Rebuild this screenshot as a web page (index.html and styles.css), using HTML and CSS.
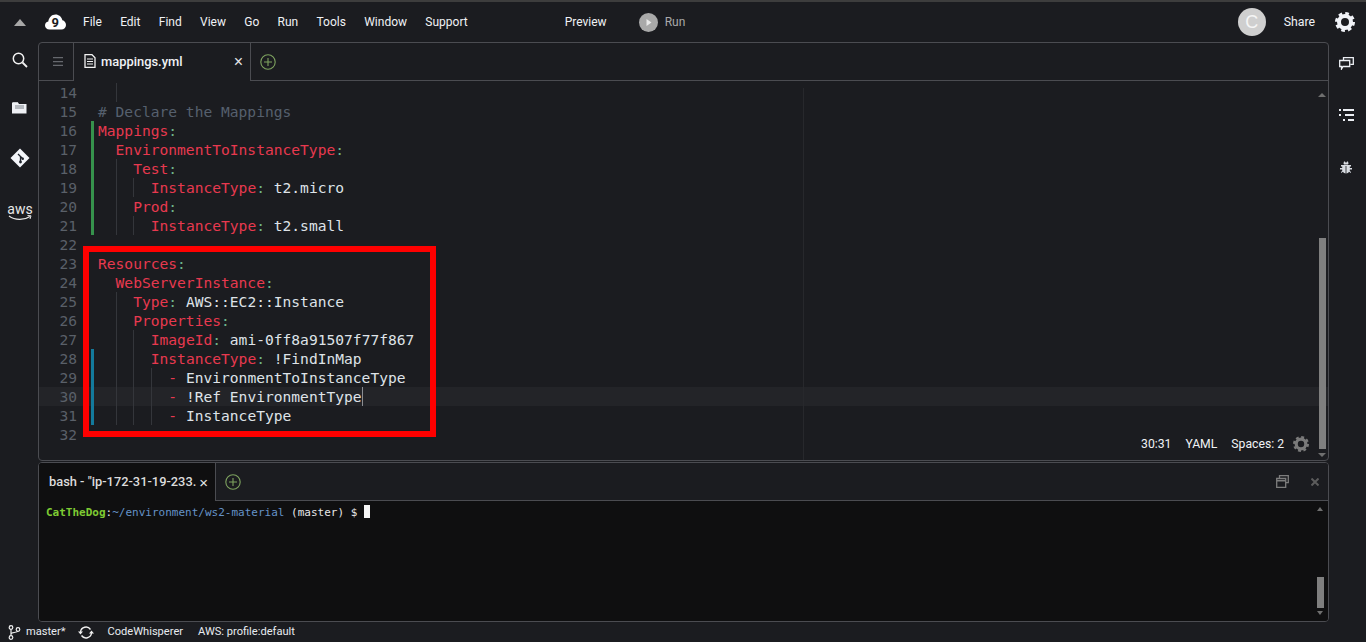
FILE: index.html
```html
<!DOCTYPE html>
<html lang="en">
<head>
<meta charset="utf-8">
<title>mappings.yml</title>
<link rel="stylesheet" href="styles.css">
</head>
<body>
<div class="app">
  <header class="topbar">
    <svg class="caret" width="12" height="7" viewBox="0 0 12 7"><path d="M6 0l6 7H0z" fill="#a8a8a8"/></svg>
    <svg class="logo" width="21" height="16" viewBox="0 0 21 16"><path d="M4.500 15.500C1.800 15.500 0 13.800 0 11.500c0-2 1.300-3.500 3.300-3.900C3.900 3.300 6.900 0.500 10.500 0.500c3.400 0 6.200 2.400 6.900 5.700 2.100 0.500 3.600 2.400 3.600 4.700 0 2.600-2 4.600-4.600 4.600z" fill="#fff"/><text x="10.300" y="12.500" class="logo-nine">9</text></svg>
    <nav class="menu">
      <span>File</span><span>Edit</span><span>Find</span><span>View</span><span>Go</span><span>Run</span><span>Tools</span><span>Window</span><span>Support</span>
    </nav>
    <span class="preview">Preview</span>
    <span class="run"><svg width="19" height="19" viewBox="0 0 19 19"><circle cx="9.500" cy="9.500" r="9.500" fill="#a9a9a9"/><path d="M7.500 6l5 3.500-5 3.500z" fill="#e8e8e8"/></svg>Run</span>
    <span class="spacer"></span>
    <span class="avatar">C</span>
    <span class="share">Share</span>
    <svg class="gear-top" width="20" height="20" viewBox="0 0 20 20"><circle cx="10" cy="10" r="6" fill="none" stroke="#f1f3f8" stroke-width="4"/><circle cx="10" cy="10" r="8.500" fill="none" stroke="#f1f3f8" stroke-width="3" stroke-dasharray="3.600 3.075"/></svg>
  </header>

  <div class="middle">
    <aside class="side-left">
      <svg class="s-search" width="16" height="16" viewBox="0 0 16 16"><circle cx="6.500" cy="6.500" r="5.200" fill="none" stroke="#f2f2f2" stroke-width="1.500"/><path d="M10.500 10.500l4.500 4.500" stroke="#f2f2f2" stroke-width="1.800"/></svg>
      <svg class="s-folder" width="15" height="13" viewBox="0 0 15 13"><path d="M0 1.500h6l1 1.500h7.500v9.500H0z" fill="#eef0f4"/><path d="M3 4.500h9v1H3zM3 6.500h9v1H3z" fill="#7b8088"/><path d="M1 1h5v1H1z" fill="#c5c8cc"/></svg>
      <svg class="s-git" width="20" height="20" viewBox="0 0 20 20"><path d="M10 0.500L19.500 10 10 19.500 0.500 10z" fill="#f4f6fa"/><path d="M8 6l2.500 2.500M10.500 8.500v5M10.500 8.500l2 2" stroke="#20242c" stroke-width="1.300" fill="none"/><circle cx="10.500" cy="14" r="1.400" fill="#20242c"/><circle cx="12.700" cy="10.700" r="1.300" fill="#20242c"/></svg>
      <div class="s-aws"><span>aws</span><svg width="24" height="6" viewBox="0 0 24 6"><path d="M1 1c6 4.500 15 4.500 21 0.500" fill="none" stroke="#e8e8e8" stroke-width="1.200"/><path d="M19.500 0.500L23 0.800 22 4" fill="none" stroke="#e8e8e8" stroke-width="1"/></svg></div>
    </aside>

    <main class="work">
      <section class="panel editor">
        <div class="tabs">
          <div class="hamb"><svg width="10" height="9" viewBox="0 0 10 9"><path d="M0 0h10v1.300H0zM0 3.900h10v1.300H0zM0 7.700h10V9H0z" fill="#66686e"/></svg></div>
          <div class="tab ed-tab">
            <svg width="12" height="14" viewBox="0 0 12 14"><path d="M1 .7h7l3 3v9.600H1z" fill="#1b1c20" stroke="#f2f2f2" stroke-width="1.300"/><path d="M3 5h6M3 7.500h6M3 10h6" stroke="#f2f2f2"/></svg>
            <span class="tab-name">mappings.yml</span>
            <span class="tab-x">×</span>
          </div>
          <div class="add-cell"><svg width="16" height="16" viewBox="0 0 16 16"><circle cx="8" cy="8" r="7.200" fill="none" stroke="#7ea35f" stroke-width="1.100"/><path d="M8 4v8M4 8h8" stroke="#7ea35f" stroke-width="1.100"/></svg></div>
        </div>
        <div class="code">
          <div class="row"><span class="num">14</span><span class="mark"></span><span class="src">  <i class="g">  </i></span></div>
          <div class="row"><span class="num">15</span><span class="mark"></span><span class="src cm"># Declare the Mappings</span></div>
          <div class="row"><span class="num">16</span><span class="mark add"></span><span class="src"><b>Mappings</b><u>:</u></span></div>
          <div class="row"><span class="num">17</span><span class="mark add"></span><span class="src">  <b>EnvironmentToInstanceType</b><u>:</u></span></div>
          <div class="row"><span class="num">18</span><span class="mark add"></span><span class="src">  <i class="g">  </i><b>Test</b><u>:</u></span></div>
          <div class="row"><span class="num">19</span><span class="mark add"></span><span class="src">  <i class="g">  </i><i class="g">  </i><b>InstanceType</b><u>:</u> t2.micro</span></div>
          <div class="row"><span class="num">20</span><span class="mark add"></span><span class="src">  <i class="g">  </i><b>Prod</b><u>:</u></span></div>
          <div class="row"><span class="num">21</span><span class="mark add"></span><span class="src">  <i class="g">  </i><i class="g">  </i><b>InstanceType</b><u>:</u> t2.small</span></div>
          <div class="row"><span class="num">22</span><span class="mark"></span><span class="src"></span></div>
          <div class="row"><span class="num">23</span><span class="mark"></span><span class="src"><b>Resources</b><u>:</u></span></div>
          <div class="row"><span class="num">24</span><span class="mark"></span><span class="src">  <b>WebServerInstance</b><u>:</u></span></div>
          <div class="row"><span class="num">25</span><span class="mark"></span><span class="src">  <i class="g">  </i><b>Type</b><u>:</u> AWS::EC2::Instance</span></div>
          <div class="row"><span class="num">26</span><span class="mark"></span><span class="src">  <i class="g">  </i><b>Properties</b><u>:</u></span></div>
          <div class="row"><span class="num">27</span><span class="mark"></span><span class="src">  <i class="g">  </i><i class="g">  </i><b>ImageId</b><u>:</u> ami-0ff8a91507f77f867</span></div>
          <div class="row"><span class="num">28</span><span class="mark mod"></span><span class="src">  <i class="g">  </i><i class="g">  </i><b>InstanceType</b><u>:</u> !FindInMap</span></div>
          <div class="row"><span class="num">29</span><span class="mark mod"></span><span class="src">  <i class="g">  </i><i class="g">  </i><i class="g">  </i><b>-</b> EnvironmentToInstanceType</span></div>
          <div class="row active"><span class="num">30</span><span class="mark mod"></span><span class="src">  <i class="g">  </i><i class="g">  </i><i class="g">  </i><b>-</b> !Ref EnvironmentType<span class="caret-bar"></span></span></div>
          <div class="row"><span class="num">31</span><span class="mark mod"></span><span class="src">  <i class="g">  </i><i class="g">  </i><i class="g">  </i><b>-</b> InstanceType</span></div>
          <div class="row"><span class="num">32</span><span class="mark"></span><span class="src"></span></div>
        </div>
        <div class="margin-line"></div>
        <div class="ed-scroll"><span class="arrow up"></span><span class="thumb"></span><span class="arrow down"></span></div>
        <div class="ed-status">
          <span>30:31</span><span>YAML</span><span>Spaces: 2</span>
          <svg width="16" height="16" viewBox="0 0 20 20"><circle cx="10" cy="10" r="6" fill="none" stroke="#7a7a7a" stroke-width="4"/><circle cx="10" cy="10" r="8.500" fill="none" stroke="#7a7a7a" stroke-width="3" stroke-dasharray="3.600 3.075"/></svg>
        </div>
        <div class="highlight"></div>
      </section>

      <section class="panel terminal">
        <div class="tabs term-tabs">
          <div class="tab term-tab"><span class="term-name">bash - "ip-172-31-19-233.</span><span class="tab-x">×</span></div>
          <div class="add-cell"><svg width="16" height="16" viewBox="0 0 16 16"><circle cx="8" cy="8" r="7.200" fill="none" stroke="#7ea35f" stroke-width="1.100"/><path d="M8 4v8M4 8h8" stroke="#7ea35f" stroke-width="1.100"/></svg></div>
          <span class="spacer"></span>
          <svg class="restore" width="13" height="13" viewBox="0 0 13 13"><path d="M3.500 3V.7h8.800v7H10" fill="none" stroke="#7d7d7d" stroke-width="1.300"/><path d="M.7 3.500h9v8.800h-9z" fill="none" stroke="#7d7d7d" stroke-width="1.300"/><path d="M1 5h8v1.500H1z" fill="#7d7d7d"/></svg>
          <svg class="term-close" width="8" height="8" viewBox="0 0 8 8"><path d="M.5.500l7 7M7.500.500l-7 7" stroke="#5c5c5c" stroke-width="2"/></svg>
        </div>
        <div class="term-body">
          <div class="prompt"><b>CatTheDog</b><em>:</em><u>~/environment/ws2-material</u> (master) $ <span class="cursor"></span></div>
          <div class="term-scroll"><span class="arrow up"></span><span class="thumb"></span><span class="arrow down"></span></div>
        </div>
      </section>
    </main>

    <aside class="side-right">
      <svg class="r-chat" width="15" height="13" viewBox="0 0 15 13"><path d="M4.500 3V.7h9.800v6.600h-3" fill="none" stroke="#eceff4" stroke-width="1.300"/><path d="M.7 3.500h10v6H4L2.500 12V9.500H.7z" fill="#1b1c20" stroke="#eceff4" stroke-width="1.300"/></svg>
      <svg class="r-list" width="15" height="13" viewBox="0 0 15 13"><path d="M0 1h2v2H0zM4 1h11v2H4zM0 6h2v2H0zM6 6h9v2H6zM4 11h2v2H4zM9 11h6v2H9z" fill="#eceff4"/></svg>
      <svg class="r-bug" width="12" height="13" viewBox="0 0 12 13"><path d="M3.500 2.500L4 0.500h1l.4 1h1.200l.4-1h1l.5 2-.5 1H4z" fill="#d9dce2"/><path d="M1 4h10v1.500H9.800V7H12v1.500H9.800V10l1.200 1v1l-2-1.200c-.6 1-1.500 1.500-3 1.500s-2.400-.5-3-1.500L1 12v-1l1.200-1V8.500H0V7h2.200V5.500H1z" fill="#d9dce2"/><path d="M5.600 5h.8v7h-.8z" fill="#1b1c20"/></svg>
    </aside>
  </div>

  <footer class="statusbar">
    <svg width="13" height="15" viewBox="0 0 13 15"><circle cx="3" cy="2.500" r="1.800" fill="none" stroke="#f0f0f0" stroke-width="1.200"/><circle cx="3" cy="12.500" r="1.800" fill="none" stroke="#f0f0f0" stroke-width="1.200"/><circle cx="10" cy="4.500" r="1.800" fill="none" stroke="#f0f0f0" stroke-width="1.200"/><path d="M3 4.500v6M3 9c0-2 6-1 7-3" fill="none" stroke="#f0f0f0" stroke-width="1.200"/></svg>
    <span class="branch">master*</span>
    <svg class="sync" width="16" height="13" viewBox="0 0 16 13"><path d="M2.500 6a5.500 5.500 0 0 1 10-2.500M13.500 7a5.500 5.500 0 0 1-10 2.500" fill="none" stroke="#f0f0f0" stroke-width="1.400"/><path d="M0 5.500h5L2.500 8.500zM16 7.500h-5l2.500-3z" fill="#f0f0f0"/></svg>
    <span class="cw">CodeWhisperer</span>
    <span class="profile">AWS: profile:default</span>
  </footer>
</div>
</body>
</html>
```

FILE: styles.css
```css
* { box-sizing: border-box; }
html, body { margin: 0; padding: 0; height: 100%; overflow: hidden; }
body {
  background: #1b1c20;
  color: #f0f2f5;
  font: 12px/1 Roboto, "Liberation Sans", sans-serif;
}
.app { width: 1366px; height: 642px; display: flex; flex-direction: column; }
.spacer { flex: 1; }

/* top bar */
.topbar {
  height: 42px;
  border-top: 2px solid #3d3d3d;
  display: flex;
  align-items: center;
  padding: 0 11px 0 14px;
  flex: none;
}
.caret { margin-right: 19px; }
.logo { margin-right: 17px; }
.logo-nine { font: 700 13px Roboto, sans-serif; fill: #1b1c20; text-anchor: middle; }
.menu { display: flex; gap: 18.300px; }
.menu span { font-size: 12px; }
.preview { margin-left: 97px; }
.run { margin-left: 32px; display: flex; align-items: center; gap: 7px; color: #a9a9a9; }
.avatar {
  width: 28px; height: 28px; border-radius: 50%;
  background: #cfcfcf; color: #f5f5f5;
  display: flex; align-items: center; justify-content: center;
  font: 18px "Liberation Sans", sans-serif;
}
.share { margin-left: 18px; font-size: 12.300px; }
.gear-top { margin-left: 20px; }

/* layout */
.middle { flex: 1; display: flex; min-height: 0; }
.side-left { width: 38px; flex: none; display: flex; flex-direction: column; align-items: center; position: relative; }
.s-search { margin: 10px 0 0 1px; }
.s-folder { margin: 33px 0 0 1px; }
.s-git { margin: 34px 0 0 1px; }
.s-aws { margin: 36px 0 0 2px; display: flex; flex-direction: column; align-items: center; color: #e8e8e8; font: 14px/11px Roboto, sans-serif; }
.side-right { width: 37px; flex: none; display: flex; flex-direction: column; align-items: center; padding-right: 3px; }
.r-chat { margin: 15px 0 0 0; }
.r-list { margin-top: 38px; }
.r-bug { margin-top: 40px; }
.work { width: 1291px; display: flex; flex-direction: column; gap: 1px; }
.panel { border: 1px solid #4b4c51; border-radius: 4px; position: relative; overflow: hidden; }
.editor { height: 419px; flex: none; }
.terminal { flex: 1; display: flex; flex-direction: column; }

/* tabs */
.tabs { height: 38px; display: flex; align-items: stretch; border-bottom: 1px solid #4b4c51; }
.hamb { width: 35px; border-right: 1px solid #4b4c51; display: flex; align-items: center; justify-content: center; padding-left: 3px; }
.tab {
  width: 177px; margin-bottom: -1px; background: #1b1c20;
  border-right: 1px solid #4b4c51;
  display: flex; align-items: center; padding: 0 7px 2px 10px;
}
.ed-tab .tab-x { position: relative; top: 1px; }
.tab-name { margin-left: 5px; flex: 1; font: 500 12.900px Roboto, sans-serif; }
.tab-x { font: 16px "Liberation Sans", sans-serif; color: #e8e8e8; }
.add-cell { display: flex; align-items: center; padding-left: 9px; }

/* code */
.code {
  height: 379px;
  padding-top: 2px;
  font: 14.600px/19px "DejaVu Sans Mono", monospace;
  overflow: hidden;
}
.row { display: flex; height: 19px; }
.row.active { background: #232428; }
.num { width: 38px; text-align: right; color: #5a6069; flex: none; }
.mark { width: 3px; margin-left: 14px; flex: none; }
.mark.add { background: #36924c; }
.mark.mod { background: #137a9c; }
.src { margin-left: 4px; white-space: pre; color: #dfe3e8; }
.src b { font-weight: 400; color: #e8394f; }
.src u { text-decoration: none; color: #6db58a; }
.src i { font-style: normal; }
.g { box-shadow: inset 1px 0 0 #34363b; display: inline-block; height: 19px; }
.cm { color: #56606e; }
.caret-bar { display: inline-block; width: 1px; height: 19px; background: #8a8d92; vertical-align: top; }
.margin-line { position: absolute; left: 764px; top: 45px; bottom: 0; width: 1px; background: #27282c; }
.ed-scroll {
  position: absolute; right: 0; top: 38px; bottom: 0; width: 12px;
  display: flex; flex-direction: column; align-items: center;
}
.thumb { background: #7f7f7f; width: 7px; display: block; }
.ed-scroll .thumb { position: absolute; top: 157px; bottom: 11px; }
.arrow { width: 0; height: 0; border-left: 4px solid transparent; border-right: 4px solid transparent; position: absolute; }
.arrow.up { border-bottom: 4px solid #6f6f6f; top: 12px; }
.arrow.down { border-top: 4px solid #6f6f6f; bottom: 3px; }
.ed-status {
  position: absolute; right: 19px; bottom: 8px;
  display: flex; align-items: center; gap: 14px; color: #f0f2f5; font-size: 12.200px;
}
.ed-status svg { margin-left: -5px; }
.highlight {
  position: absolute; left: 44px; top: 203px; width: 353px; height: 191px;
  border: 6px solid #f00;
}

/* terminal */
.term-tabs { background: #1b1c20; }
.term-tab { width: 177px; background: #0f0f10; padding: 0 7px 2px 10px; justify-content: space-between; }
.term-name { font: 500 12.850px Roboto, sans-serif; color: #dcdcdc; white-space: nowrap; overflow: hidden; }
.term-tab .tab-x { font-size: 15px; position: relative; top: 1px; }
.restore { align-self: center; margin-right: 22px; }
.term-close { align-self: center; margin-right: 9px; }
.term-body {
  flex: 1; background: #0f0f10; position: relative;
  padding: 4px 7px;
}
.prompt { font: 11px/14px "DejaVu Sans Mono", monospace; color: #e6e6e6; white-space: pre; }
.prompt b { color: #7ecb33; }
.prompt em { font-style: normal; color: #e6e6e6; }
.prompt u { text-decoration: none; color: #6593c8; }
.cursor { display: inline-block; width: 6px; height: 13px; background: #f5f5f5; vertical-align: -2px; }
.term-scroll { position: absolute; right: 4px; top: 0; bottom: 0; width: 8px; display: flex; justify-content: center; }
.term-scroll .thumb { position: absolute; top: 76px; bottom: 13px; }
.term-scroll .arrow.up { top: 6px; border-left-width: 3px; border-right-width: 3px; }
.term-scroll .arrow.down { bottom: 6px; border-left-width: 3px; border-right-width: 3px; }

/* status bar */
.statusbar { height: 20px; flex: none; display: flex; align-items: center; padding-left: 8px; font-size: 11.100px; color: #e8ebf0; }
.branch { margin-left: 5px; }
.sync { margin-left: 12px; }
.cw { margin-left: 14px; }
.profile { margin-left: 15px; }
```
